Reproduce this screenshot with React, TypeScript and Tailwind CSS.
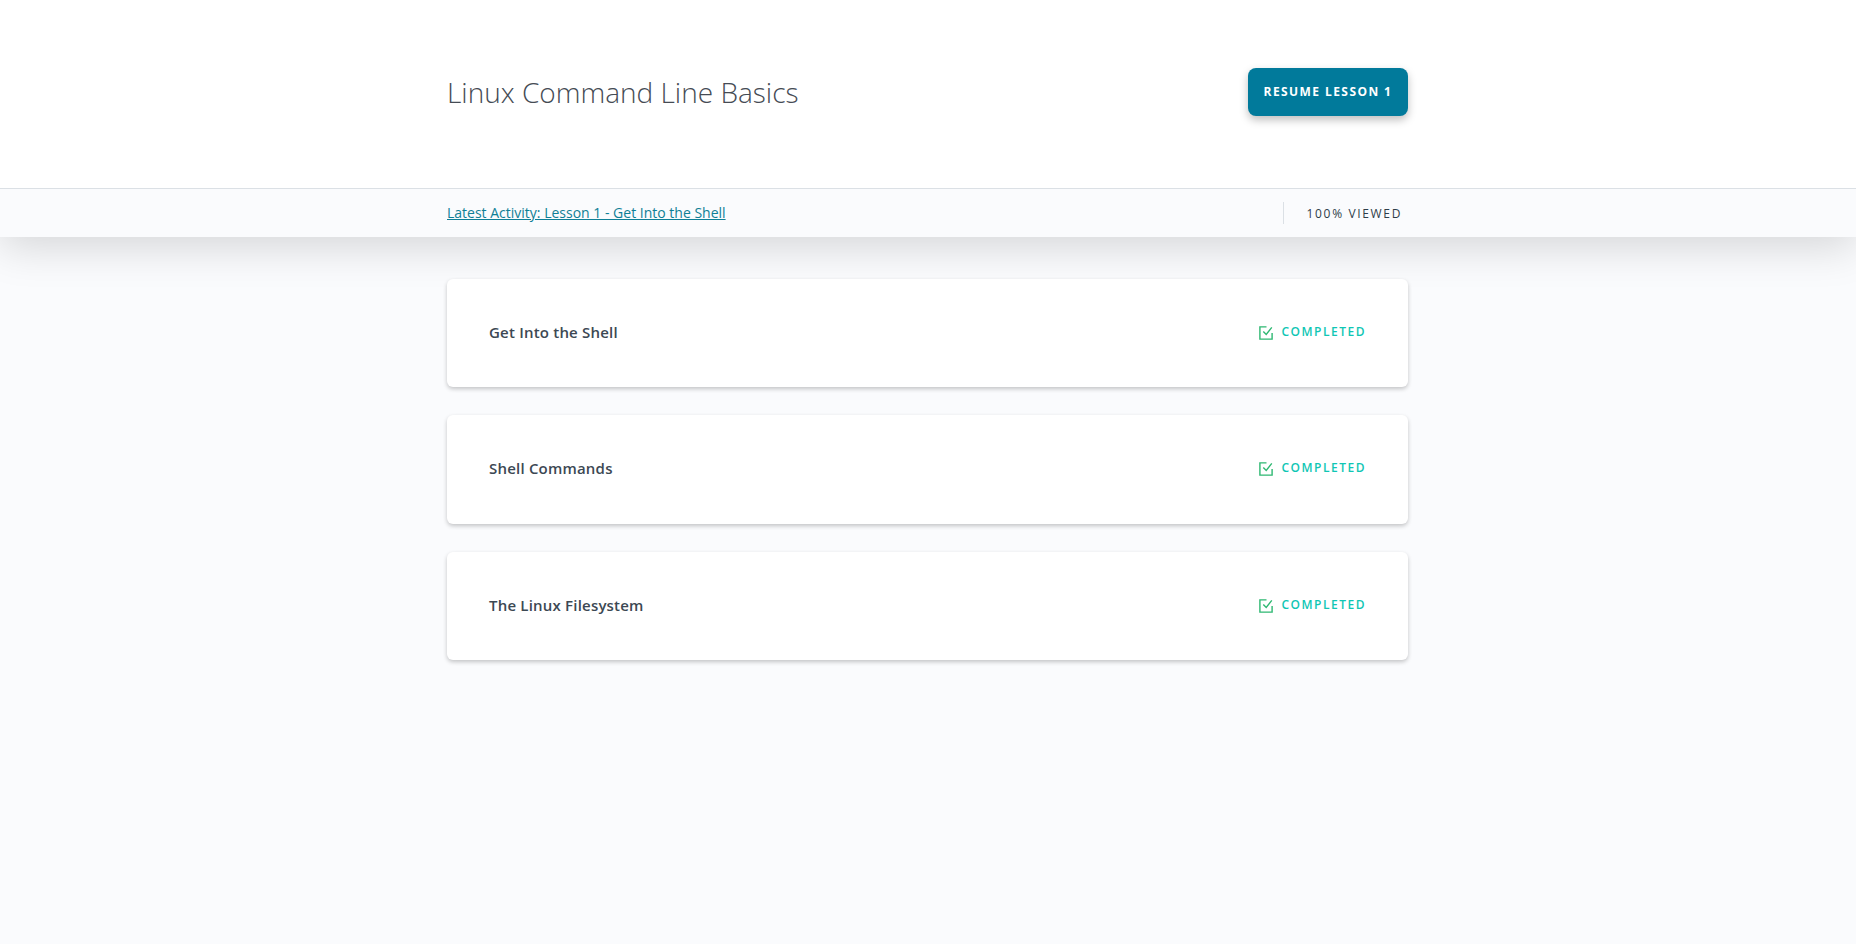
const lessons = ["Get Into the Shell", "Shell Commands", "The Linux Filesystem"];

function CheckIcon() {
  return (
    <svg className="mt-[2px] mr-[9px] h-3.5 w-3.5" viewBox="0 0 14 14" fill="none" stroke="#2eb872" strokeWidth="1.4">
      <path d="M7.5 .9H.9v12.2h12.2V7" />
      <path d="M4.3 5.6l2.9 2.9L12.8 1.4" />
    </svg>
  );
}

export default function App() {
  return (
    <div className="min-h-screen bg-[#fafbfd] font-['Open_Sans',sans-serif] text-[#2e3d49]">
      <header className="bg-white shadow-[0_10px_40px_rgba(0,0,0,0.15)]">
        <div className="flex justify-center pr-px">
          <div className="flex h-[188px] w-[961px] items-center justify-between pb-1">
            <h1 className="text-[28px] leading-9 font-light text-[#454b54]">Linux Command Line Basics</h1>
            <button className="h-12 w-40 rounded-lg bg-[#017a9b] text-xs font-bold tracking-[1.42px] text-white shadow-[0_4px_8px_rgba(0,0,0,0.25)]">
              RESUME LESSON 1
            </button>
          </div>
        </div>
        <div className="flex h-[49px] justify-center border-t border-[#dbe0e5] bg-[#fafbfd] pr-px">
          <div className="flex h-12 w-[961px] items-center justify-between">
            <a href="#" className="text-sm text-[#0f7f96] underline">
              Latest Activity: Lesson 1 - Get Into the Shell
            </a>
            <div className="flex h-[22px] items-center border-l border-[#dbe0e5] pt-0.5 pr-1.5 pl-[23px] text-xs tracking-[1.65px]">
              100% VIEWED
            </div>
          </div>
        </div>
      </header>
      <main className="flex justify-center pt-[41.5px] pr-px">
        <div className="flex w-[961px] flex-col gap-7">
          {lessons.map((title) => (
            <section
              key={title}
              className="flex h-[108.5px] items-center justify-between rounded-md bg-white px-[42px] pb-[1.5px] shadow-[0_2px_4px_rgba(0,0,0,0.22)]"
            >
              <h2 className="text-[15px] font-semibold tracking-[0.2px] text-[#3c4853]">{title}</h2>
              <div className="flex items-center pb-px text-xs leading-4 font-semibold tracking-[1.5px] text-[#10c6b4]">
                <CheckIcon />
                COMPLETED
              </div>
            </section>
          ))}
        </div>
      </main>
    </div>
  );
}
